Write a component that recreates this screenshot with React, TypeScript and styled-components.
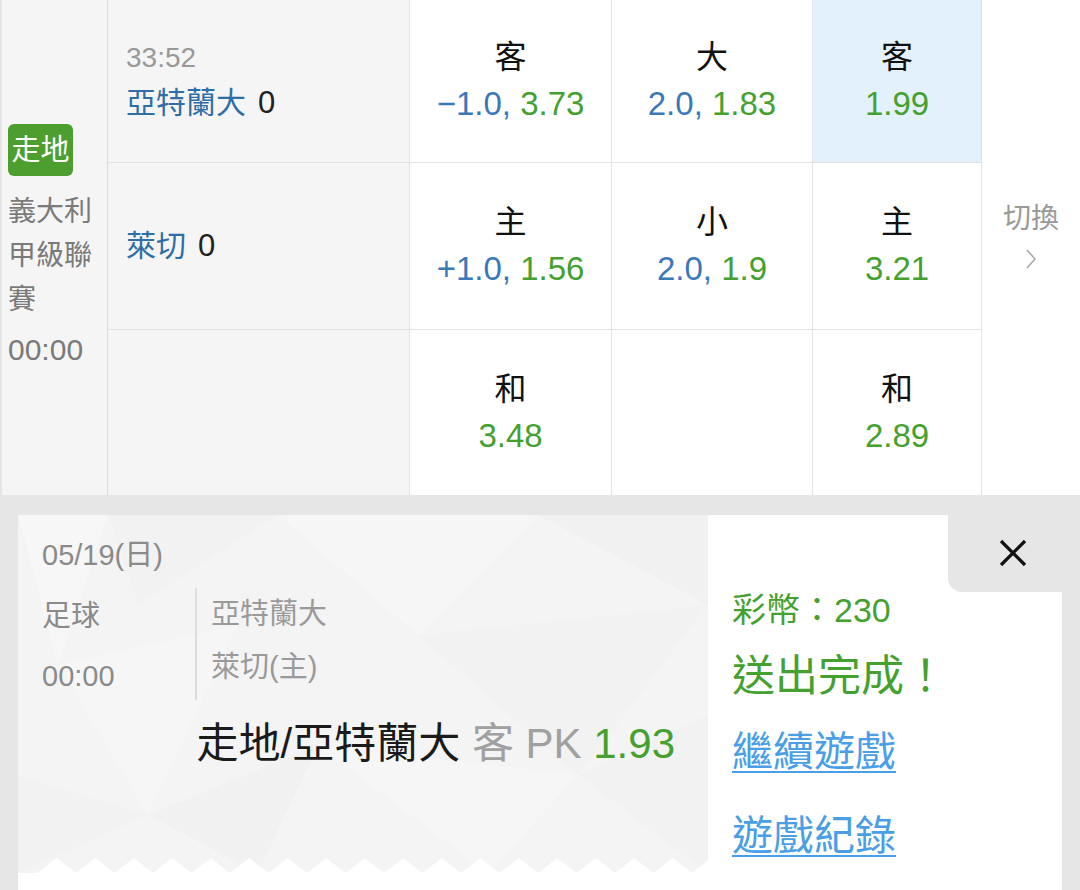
import React from 'react';
import styled, { createGlobalStyle } from 'styled-components';

// -----------------------------------------------------------------------------
// Data
// -----------------------------------------------------------------------------
interface IOdd {
  label?: string;
  line?: string;
  price?: string;
  active?: boolean;
}

const rows: { team?: string; clock?: string; odds: IOdd[] }[] = [
  {
    clock: '33:52',
    team: '亞特蘭大',
    odds: [
      { label: '客', line: '−1.0', price: '3.73' },
      { label: '大', line: '2.0', price: '1.83' },
      { label: '客', price: '1.99', active: true },
    ],
  },
  {
    team: '萊切',
    odds: [
      { label: '主', line: '+1.0', price: '1.56' },
      { label: '小', line: '2.0', price: '1.9' },
      { label: '主', price: '3.21' },
    ],
  },
  {
    odds: [{ label: '和', price: '3.48' }, {}, { label: '和', price: '2.89' }],
  },
];

// -----------------------------------------------------------------------------
// Global
// -----------------------------------------------------------------------------
const GlobalStyle = createGlobalStyle`
  html, body {
    margin: 0;
    padding: 0;
    background: #e6e6e6;
  }
  body {
    font-family: "Liberation Sans", "Noto Sans CJK TC", sans-serif;
    color: #222;
  }
`;

// -----------------------------------------------------------------------------
// Odds board
// -----------------------------------------------------------------------------
const Board = styled.div`
  display: grid;
  grid-template-columns: 108px 302px 202px 201px 169px 1fr;
  grid-template-rows: 163px 167px 165px;
  background: #fff;
`;

const LeagueCell = styled.div`
  grid-row: 1 / 4;
  grid-column: 1;
  display: flex;
  flex-direction: column;
  justify-content: center;
  padding: 0 0 0 6px;
  background: #f5f5f5;
  border-left: 2px solid #e4e4e4;
  border-right: 1px solid #dcdcdc;
  color: #7a7a7a;
  font-size: 28px;
  line-height: 44px;
`;

const LiveBadge = styled.span`
  align-self: flex-start;
  width: 65px;
  height: 52px;
  display: flex;
  align-items: center;
  justify-content: center;
  margin-bottom: 14px;
  border-radius: 6px;
  background: #4c9e2e;
  color: #fff;
  font-size: 29px;
`;

const LeagueName = styled.div`
  width: 90px;
  line-height: 44px;
`;

const KickOff = styled.div`
  margin-top: 6px;
  font-size: 30px;
`;

const TeamCell = styled.div<{ $last?: boolean }>`
  display: flex;
  flex-direction: column;
  justify-content: center;
  padding-left: 18px;
  background: #f5f5f5;
  border-right: 1px solid #e2e2e2;
  border-bottom: ${(p) => (p.$last ? 'none' : '1px solid #e2e2e2')};
`;

const Clock = styled.div`
  color: #999;
  font-size: 28px;
  line-height: 44px;
`;

const TeamName = styled.div`
  color: #2f6ea6;
  font-size: 30px;
  line-height: 46px;

  b {
    margin-left: 12px;
    color: #222;
    font-weight: normal;
    font-size: 31px;
  }
`;

const OddCell = styled.div<{ $active?: boolean; $last?: boolean }>`
  display: flex;
  flex-direction: column;
  align-items: center;
  justify-content: center;
  background: ${(p) => (p.$active ? '#e2f1fb' : '#fff')};
  border-right: 1px solid #e2e2e2;
  border-bottom: ${(p) => (p.$last ? 'none' : '1px solid #e2e2e2')};
`;

const OddLabel = styled.div`
  color: #111;
  font-size: 32px;
  line-height: 46px;
`;

const OddValue = styled.div`
  font-size: 33px;
  line-height: 48px;
  white-space: nowrap;

  .line {
    color: #3a78b8;
  }
  .price {
    color: #45a12f;
  }
`;

const SwitchCell = styled.div`
  grid-row: 1 / 4;
  grid-column: 6;
  display: flex;
  flex-direction: column;
  align-items: center;
  justify-content: center;
  padding-bottom: 26px;
  color: #9a9a9a;
  font-size: 28px;
  line-height: 40px;
`;

// -----------------------------------------------------------------------------
// Receipt
// -----------------------------------------------------------------------------
const Sheet = styled.div`
  padding: 20px 18px 0;
  background: #e6e6e6;
`;

const Receipt = styled.div`
  display: flex;
  height: 375px;
  background: #fff;
`;

const Ticket = styled.div`
  position: relative;
  width: 690px;
  height: 358px;
  display: flex;
  flex-direction: column;
  background: #f4f4f4;
  overflow: hidden;
`;

const Pattern = styled.svg`
  position: absolute;
  inset: 0;
  z-index: 0;
`;

const TicketBody = styled.div`
  position: relative;
  z-index: 1;
  flex: 1;
  padding: 20px 33px 0 24px;
`;

const DateLine = styled.div`
  color: #8a8a8a;
  font-size: 29px;
  line-height: 40px;
`;

const InfoRow = styled.div`
  display: flex;
  margin-top: 13px;
`;

const InfoLeft = styled.div`
  width: 153px;
  display: flex;
  flex-direction: column;
  gap: 4px;
  color: #8a8a8a;
  font-size: 29px;
  line-height: 56px;
`;

const InfoTeams = styled.div`
  height: 112px;
  padding-left: 14px;
  border-left: 2px solid #dddddd;
  color: #9a9a9a;
  font-size: 29px;
  line-height: 53px;
`;

const Pick = styled.div`
  margin-top: 15px;
  text-align: right;
  font-size: 42px;
  line-height: 50px;
  color: #1a1a1a;
  white-space: nowrap;

  .muted {
    color: #a0a0a0;
  }
  .price {
    color: #45a12f;
  }
`;

const Zigzag = styled.svg`
  position: relative;
  z-index: 1;
  display: block;
  flex: none;
`;

const Result = styled.div`
  flex: 1;
  display: flex;
  flex-direction: column;
`;

const ResultHead = styled.div`
  display: flex;
  justify-content: flex-end;
`;

const CloseTab = styled.button`
  width: 114px;
  height: 77px;
  display: flex;
  align-items: center;
  justify-content: center;
  padding: 0 0 2px 16px;
  border: none;
  border-bottom-left-radius: 14px;
  background: #e6e6e6;
  cursor: pointer;
`;

const ResultBody = styled.div`
  display: flex;
  flex-direction: column;
  padding-left: 24px;
`;

const Coins = styled.div`
  color: #45a12f;
  font-size: 34px;
  line-height: 36px;
`;

const Done = styled.div`
  margin-top: 22px;
  color: #45a12f;
  font-size: 43px;
  line-height: 52px;
`;

const ResultLink = styled.a<{ $gap: number }>`
  margin-top: ${(p) => p.$gap}px;
  align-self: flex-start;
  color: #4a9ee6;
  font-size: 41px;
  line-height: 50px;
  text-decoration: underline;
  text-underline-offset: 5px;
  text-decoration-thickness: 2px;
`;

// -----------------------------------------------------------------------------
// Drawings
// -----------------------------------------------------------------------------
const Chevron = () => (
  <svg width="14" height="24" viewBox="0 0 14 24" style={{ marginTop: 8 }}>
    <polyline points="3,3 11,12 3,21" fill="none" stroke="#aaaaaa" strokeWidth="1.6" />
  </svg>
);

const CloseIcon = () => (
  <svg width="32" height="32" viewBox="0 0 32 32">
    <line x1="4" y1="4" x2="28" y2="28" stroke="#111" strokeWidth="3.2" />
    <line x1="28" y1="4" x2="4" y2="28" stroke="#111" strokeWidth="3.2" />
  </svg>
);

const TicketPattern = () => (
  <Pattern width="690" height="358" viewBox="0 0 690 358">
    <polygon points="0,0 90,0 40,150" fill="#f7f7f7" />
    <polygon points="90,0 260,0 120,90" fill="#f2f2f2" />
    <polygon points="260,0 520,0 400,120" fill="#f6f6f6" />
    <polygon points="520,0 690,0 690,90" fill="#f1f1f1" />
    <polygon points="400,120 690,90 560,260" fill="#f2f2f2" />
    <polygon points="40,150 220,110 130,300" fill="#f6f6f6" />
    <polygon points="130,300 300,230 240,358" fill="#f1f1f1" />
    <polygon points="300,230 560,260 470,358" fill="#f6f6f6" />
    <polygon points="560,260 690,200 690,358" fill="#f2f2f2" />
    <polygon points="0,260 130,300 0,358" fill="#f2f2f2" />
  </Pattern>
);

const TicketEdge = ({ width }: { width: number }) => {
  const period = 38.5;
  const pts: string[] = ['0,16'];
  for (let x = 19.5; x < width; x += period) {
    pts.push(`${x},16`, `${x + period / 2},1`);
  }
  pts.push(`${width},16`);
  return (
    <Zigzag width={width} height="16" viewBox={`0 0 ${width} 16`}>
      <polygon points={pts.join(' ')} fill="#ffffff" />
    </Zigzag>
  );
};

// -----------------------------------------------------------------------------
// Component
// -----------------------------------------------------------------------------
const App = (): JSX.Element => (
  <>
    <GlobalStyle />
    <Board>
      <LeagueCell>
        <LiveBadge>走地</LiveBadge>
        <LeagueName>義大利甲級聯賽</LeagueName>
        <KickOff>00:00</KickOff>
      </LeagueCell>

      {rows.map((row, r) => (
        <React.Fragment key={r}>
          <TeamCell $last={r === 2}>
            {row.clock && <Clock>{row.clock}</Clock>}
            {row.team && (
              <TeamName>
                {row.team}
                <b>0</b>
              </TeamName>
            )}
          </TeamCell>
          {row.odds.map((o, i) => (
            <OddCell key={i} $active={o.active} $last={r === 2}>
              {o.label && <OddLabel>{o.label}</OddLabel>}
              {o.price && (
                <OddValue>
                  {o.line && <span className="line">{o.line}, </span>}
                  <span className="price">{o.price}</span>
                </OddValue>
              )}
            </OddCell>
          ))}
        </React.Fragment>
      ))}

      <SwitchCell>
        切換
        <Chevron />
      </SwitchCell>
    </Board>

    <Sheet>
      <Receipt>
        <Ticket>
          <TicketPattern />
          <TicketBody>
            <DateLine>05/19(日)</DateLine>
            <InfoRow>
              <InfoLeft>
                <div>足球</div>
                <div>00:00</div>
              </InfoLeft>
              <InfoTeams>
                <div>亞特蘭大</div>
                <div>萊切(主)</div>
              </InfoTeams>
            </InfoRow>
            <Pick>
              走地/亞特蘭大 <span className="muted">客 PK</span>{' '}
              <span className="price">1.93</span>
            </Pick>
          </TicketBody>
          <TicketEdge width={690} />
        </Ticket>

        <Result>
          <ResultHead>
            <CloseTab aria-label="close">
              <CloseIcon />
            </CloseTab>
          </ResultHead>
          <ResultBody>
            <Coins>彩幣：230</Coins>
            <Done>送出完成！</Done>
            <ResultLink href="#" $gap={25}>
              繼續遊戲
            </ResultLink>
            <ResultLink href="#" $gap={34}>
              遊戲紀錄
            </ResultLink>
          </ResultBody>
        </Result>
      </Receipt>
    </Sheet>
  </>
);

export default App;
